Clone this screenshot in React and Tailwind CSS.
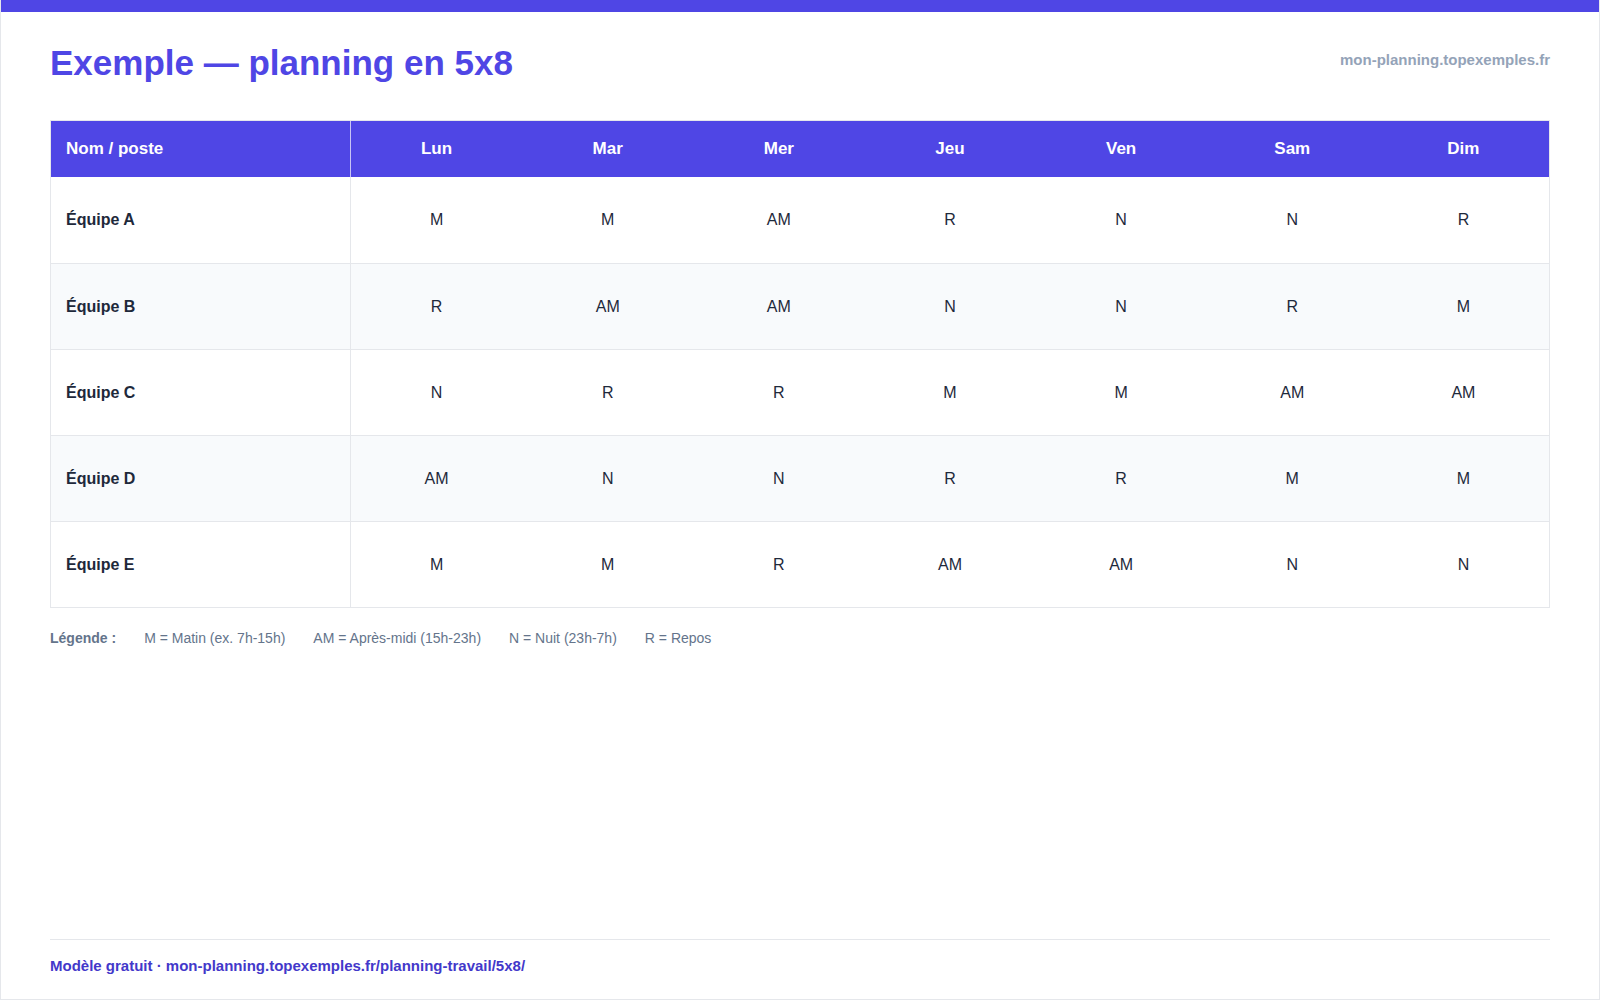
export default function App() {
  const days = ["Lun", "Mar", "Mer", "Jeu", "Ven", "Sam", "Dim"];
  const rows = [
    ["Équipe A", ["M", "M", "AM", "R", "N", "N", "R"]],
    ["Équipe B", ["R", "AM", "AM", "N", "N", "R", "M"]],
    ["Équipe C", ["N", "R", "R", "M", "M", "AM", "AM"]],
    ["Équipe D", ["AM", "N", "N", "R", "R", "M", "M"]],
    ["Équipe E", ["M", "M", "R", "AM", "AM", "N", "N"]],
  ];
  return (
    <div className="w-[1600px] h-[1000px] bg-white flex flex-col border-x border-b border-gray-200" style={{ fontFamily: '"Liberation Sans", Arial, sans-serif' }}>
      <div className="h-[12px] bg-[#4f46e5]" />
      <div className="flex-1 flex flex-col px-[49px]">
        <div className="flex justify-between items-start mt-[29px]">
          <h1 className="text-[35px] font-bold text-[#4f46e5] leading-[44px]">Exemple — planning en 5x8</h1>
          <div className="text-[15px] font-bold text-[#94a3b8] mt-[8px]">mon-planning.topexemples.fr</div>
        </div>
        <div className="mt-[35px] border border-gray-200">
          <div className="flex h-[56px] bg-[#4f46e5] text-white text-[17px] font-bold items-center">
            <div className="w-[300px] pl-[15px] h-full flex items-center border-r border-[#c7c4f5]">Nom / poste</div>
            {days.map((d) => (
              <div key={d} className="flex-1 text-center">{d}</div>
            ))}
          </div>
          {rows.map(([name, cells], i) => (
            <div key={name} className={"flex h-[86px] items-center text-[16px] text-[#1e293b] " + (i % 2 === 1 ? "bg-[#f8fafc]" : "bg-white") + (i > 0 ? " border-t border-gray-200" : "")}>
              <div className="w-[300px] pl-[15px] h-full flex items-center font-bold border-r border-gray-200">{name}</div>
              {cells.map((c, j) => (
                <div key={j} className="flex-1 text-center">{c}</div>
              ))}
            </div>
          ))}
        </div>
        <div className="flex gap-[28px] mt-[20px] text-[14px] text-[#64748b]">
          <span className="font-bold">Légende :</span>
          <span>M = Matin (ex. 7h-15h)</span>
          <span>AM = Après-midi (15h-23h)</span>
          <span>N = Nuit (23h-7h)</span>
          <span>R = Repos</span>
        </div>
        <div className="flex-1" />
        <div className="border-t border-gray-200 pt-[15px] pb-[22px] text-[15px] font-bold text-[#4338ca]">
          Modèle gratuit · mon-planning.topexemples.fr/planning-travail/5x8/
        </div>
      </div>
    </div>
  );
}
